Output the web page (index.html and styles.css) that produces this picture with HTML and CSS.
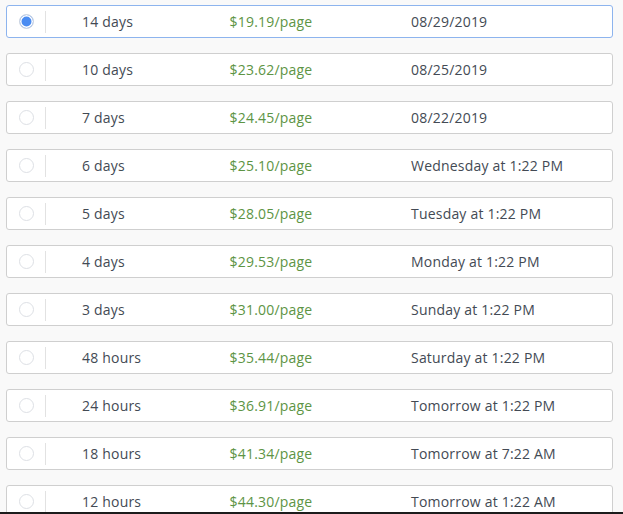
FILE: index.html
```html
<!DOCTYPE html>
<html lang="en">
<head>
  <meta charset="UTF-8" />
  <meta name="viewport" content="width=device-width, initial-scale=1" />
  <link rel="stylesheet" href="styles.css">
</head>
<body>

  <div class="options">
    <label class="option selected">
      <span class="pick"><span class="radio"></span></span>
      <span class="term">14 days</span>
      <span class="price">$19.19/page</span>
      <span class="due">08/29/2019</span>
    </label>
    <label class="option">
      <span class="pick"><span class="radio"></span></span>
      <span class="term">10 days</span>
      <span class="price">$23.62/page</span>
      <span class="due">08/25/2019</span>
    </label>
    <label class="option">
      <span class="pick"><span class="radio"></span></span>
      <span class="term">7 days</span>
      <span class="price">$24.45/page</span>
      <span class="due">08/22/2019</span>
    </label>
    <label class="option">
      <span class="pick"><span class="radio"></span></span>
      <span class="term">6 days</span>
      <span class="price">$25.10/page</span>
      <span class="due">Wednesday at 1:22 PM</span>
    </label>
    <label class="option">
      <span class="pick"><span class="radio"></span></span>
      <span class="term">5 days</span>
      <span class="price">$28.05/page</span>
      <span class="due">Tuesday at 1:22 PM</span>
    </label>
    <label class="option">
      <span class="pick"><span class="radio"></span></span>
      <span class="term">4 days</span>
      <span class="price">$29.53/page</span>
      <span class="due">Monday at 1:22 PM</span>
    </label>
    <label class="option">
      <span class="pick"><span class="radio"></span></span>
      <span class="term">3 days</span>
      <span class="price">$31.00/page</span>
      <span class="due">Sunday at 1:22 PM</span>
    </label>
    <label class="option">
      <span class="pick"><span class="radio"></span></span>
      <span class="term">48 hours</span>
      <span class="price">$35.44/page</span>
      <span class="due">Saturday at 1:22 PM</span>
    </label>
    <label class="option">
      <span class="pick"><span class="radio"></span></span>
      <span class="term">24 hours</span>
      <span class="price">$36.91/page</span>
      <span class="due">Tomorrow at 1:22 PM</span>
    </label>
    <label class="option">
      <span class="pick"><span class="radio"></span></span>
      <span class="term">18 hours</span>
      <span class="price">$41.34/page</span>
      <span class="due">Tomorrow at 7:22 AM</span>
    </label>
    <label class="option">
      <span class="pick"><span class="radio"></span></span>
      <span class="term">12 hours</span>
      <span class="price">$44.30/page</span>
      <span class="due">Tomorrow at 1:22 AM</span>
    </label>
  </div>

  <div class="edge"></div>

</body>
</html>
```

FILE: styles.css
```css
html, body {
  margin: 0;
  padding: 0;
  height: 100%;
  overflow: hidden;
}

body {
  background: #f9f9f9;
  font-family: "Open Sans", sans-serif;
  font-size: 14px;
  letter-spacing: 0.2px;
  color: #434a54;
}

.options {
  display: flex;
  flex-direction: column;
  gap: 15px;
  padding: 5px 10px 0 6px;
}

.option {
  display: grid;
  grid-template-columns: 39px 145px 160px 1fr;
  align-items: center;
  height: 31px;
  flex-shrink: 0;
  background: #fff;
  border: 1px solid #cfcfcf;
  border-radius: 3px;
  cursor: pointer;
}

.option.selected {
  border-color: #8db4ee;
}

.pick {
  display: flex;
  justify-content: center;
  align-items: center;
  height: 22px;
  border-right: 1px solid #e2e2e2;
  padding-left: 1px;
}

.radio {
  width: 15px;
  height: 15px;
  border-radius: 50%;
  border: 1px solid #dde0e5;
  background: #fff;
  box-sizing: border-box;
}

.selected .radio {
  border-color: #d6dae0;
  box-shadow: inset 0 0 0 1.5px #fff;
  background: #4a8cf2;
}

.term {
  padding-left: 36px;
}

.price {
  text-align: center;
  color: #5d9444;
}

.due {
  padding-left: 60px;
}

.edge {
  position: fixed;
  left: 0;
  right: 0;
  bottom: 0;
  height: 2px;
  background: #1c1c1c;
}
```
